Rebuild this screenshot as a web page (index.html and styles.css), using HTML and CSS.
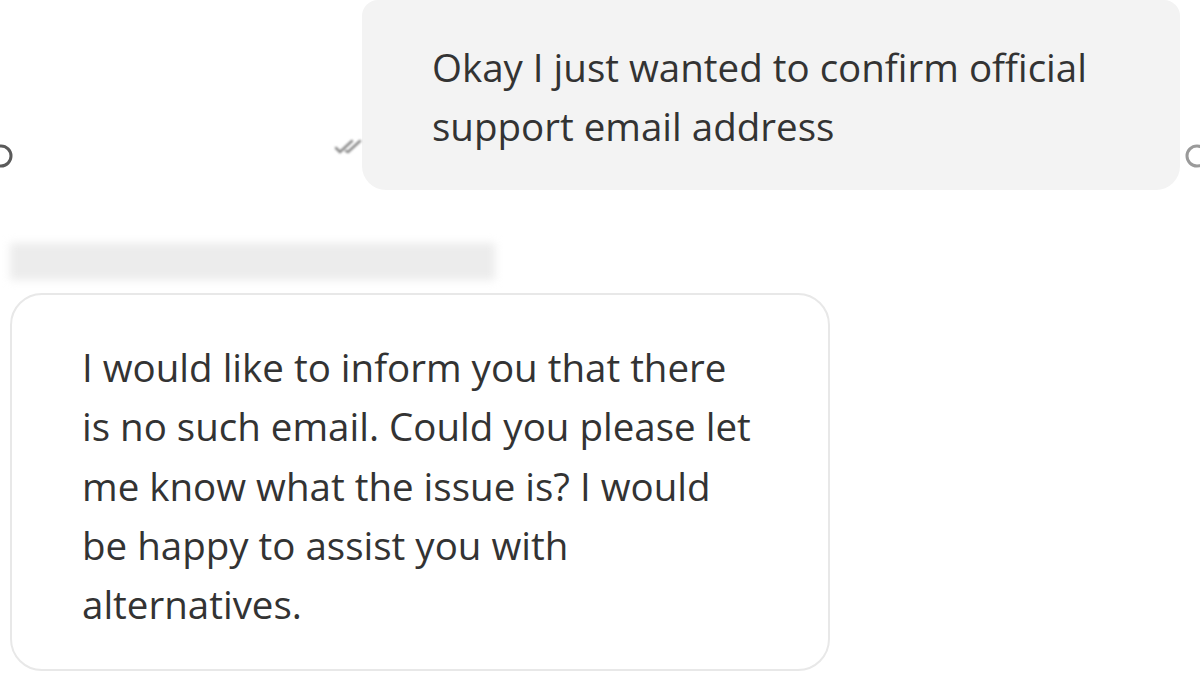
FILE: index.html
```html
<!DOCTYPE html>
<html lang="en">
<head>
    <meta charset="UTF-8">
    <meta name="viewport" content="width=device-width, initial-scale=1.0">
    <title>Support Chat</title>
    <link rel="stylesheet" href="styles.css">
</head>
<body>

    <div class="chat">
        <!-- Outgoing message -->
        <div class="row-out">
            <svg class="side-icon left" width="26" height="26" viewBox="0 0 26 26">
                <circle cx="13" cy="13" r="10" fill="none" stroke="#5a5a5a" stroke-width="3"/>
            </svg>
            <svg class="ticks" width="36" height="16" viewBox="0 0 36 16">
                <path d="M2 10 L6 14 L18 3" fill="none" stroke="#8a8a8a" stroke-width="2.5" stroke-linecap="round"/>
                <path d="M12 13 L14 14 L26 3" fill="none" stroke="#8a8a8a" stroke-width="2.5" stroke-linecap="round"/>
            </svg>
            <div class="bubble-out">
                Okay I just wanted to confirm official<br>
                support email address
            </div>
            <svg class="side-icon right" width="26" height="26" viewBox="0 0 26 26">
                <circle cx="13" cy="13" r="10" fill="none" stroke="#9a9a9a" stroke-width="3"/>
            </svg>
        </div>

        <!-- Incoming message -->
        <div class="sender"></div>
        <div class="bubble-in">
            I would like to inform you that there<br>
            is no such email. Could you please let<br>
            me know what the issue is? I would<br>
            be happy to assist you with<br>
            alternatives.
        </div>
    </div>

</body>
</html>
```

FILE: styles.css
```css
body {
    font-family: "Open Sans", Arial, sans-serif;
    margin: 0;
    padding: 0;
    background-color: #ffffff;
    color: #333333;
    overflow: hidden;
}

.chat {
    display: flex;
    flex-direction: column;
    width: 1200px;
    height: 680px;
}

.row-out {
    display: flex;
    align-items: flex-end;
    height: 190px;
}

.side-icon {
    flex-shrink: 0;
    margin-bottom: 21px;
}
.side-icon.left {
    margin-left: -12px;
}
.side-icon.right {
    margin-left: 4px;
    margin-right: -10px;
    filter: blur(0.6px);
}

.ticks {
    margin-left: auto;
    margin-right: -8px;
    margin-bottom: 36px;
    filter: blur(0.8px);
    position: relative;
    z-index: 1;
}

.bubble-out {
    width: 818px;
    box-sizing: border-box;
    height: 190px;
    padding: 38px 0 0 70px;
    background-color: #f3f3f3;
    border-radius: 16px 16px 24px 24px;
    font-size: 38.5px;
    line-height: 59px;
    white-space: nowrap;
}

.sender {
    margin: 53px 0 0 10px;
    width: 485px;
    height: 37px;
    background-color: #ececec;
    filter: blur(4px);
}

.bubble-in {
    margin: 13px 0 0 10px;
    width: 820px;
    height: 378px;
    box-sizing: border-box;
    padding: 43px 0 0 70px;
    border: 2px solid #e8e8e8;
    border-radius: 32px;
    font-size: 38.5px;
    line-height: 59.3px;
    white-space: nowrap;
}
```
